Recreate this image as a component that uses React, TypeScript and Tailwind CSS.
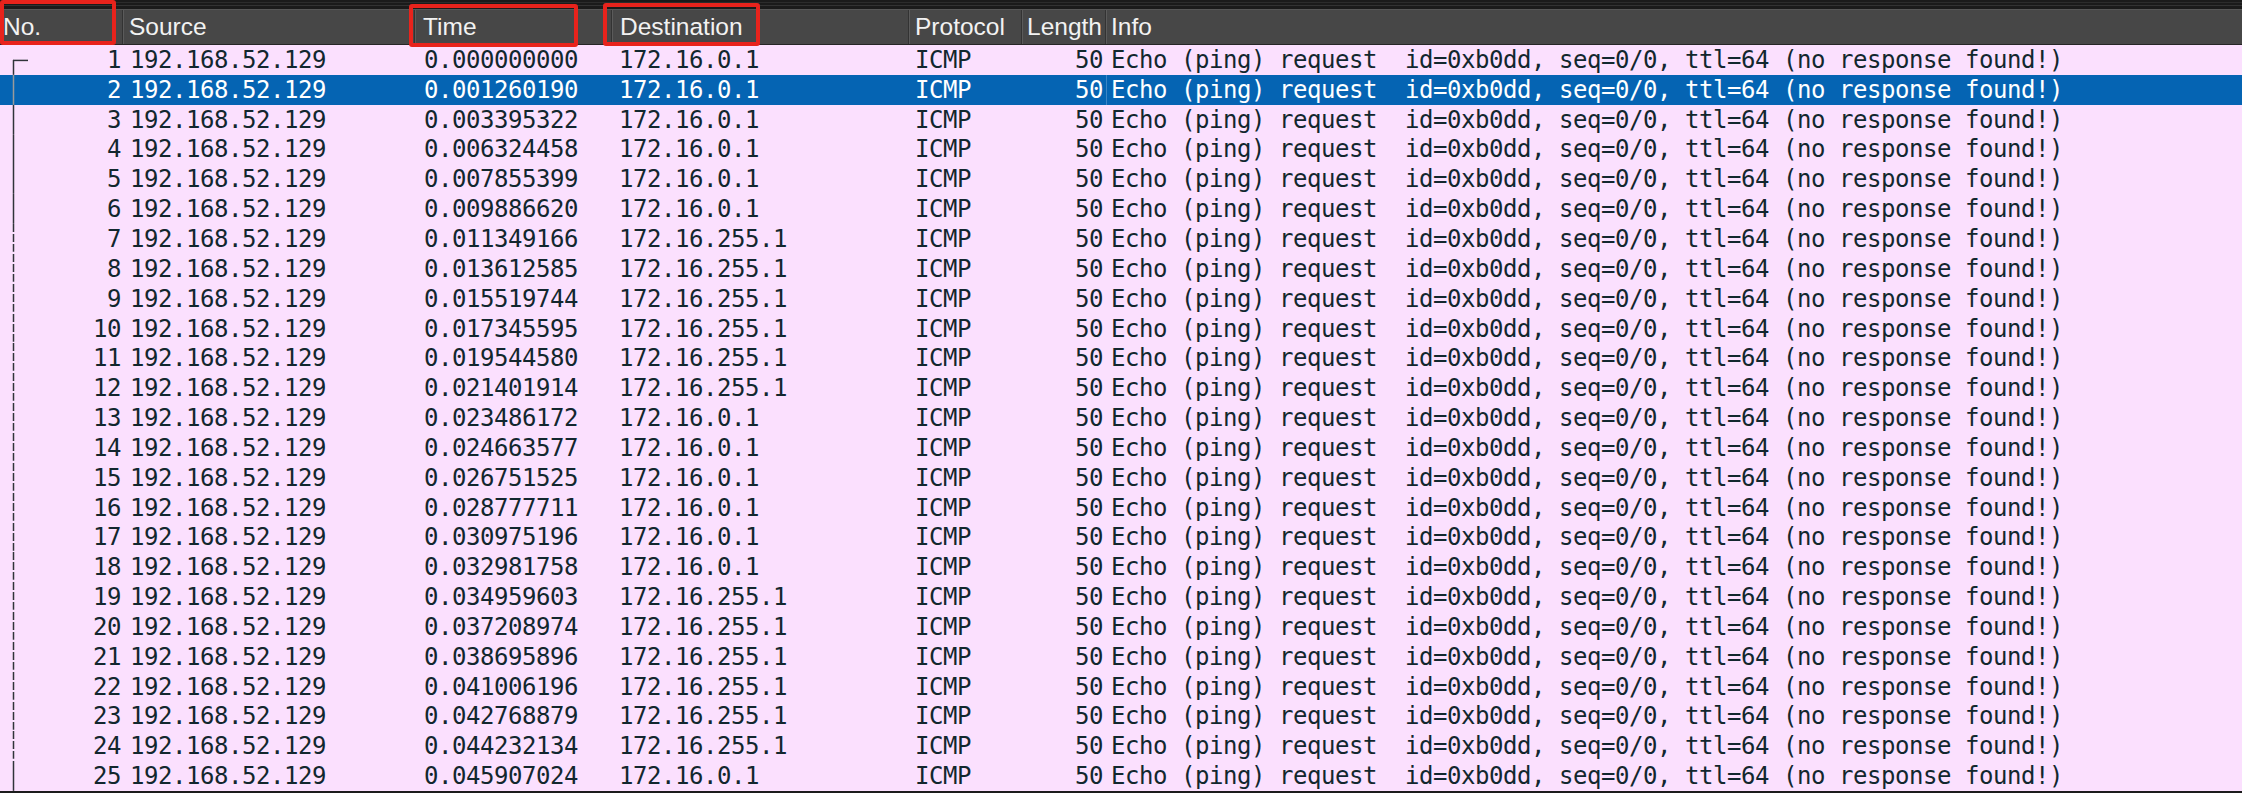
import React from "react";

type Row = { no: number; time: string; dst: string };

const data: [string, string][] = [
  ["0.000000000", "172.16.0.1"],
  ["0.001260190", "172.16.0.1"],
  ["0.003395322", "172.16.0.1"],
  ["0.006324458", "172.16.0.1"],
  ["0.007855399", "172.16.0.1"],
  ["0.009886620", "172.16.0.1"],
  ["0.011349166", "172.16.255.1"],
  ["0.013612585", "172.16.255.1"],
  ["0.015519744", "172.16.255.1"],
  ["0.017345595", "172.16.255.1"],
  ["0.019544580", "172.16.255.1"],
  ["0.021401914", "172.16.255.1"],
  ["0.023486172", "172.16.0.1"],
  ["0.024663577", "172.16.0.1"],
  ["0.026751525", "172.16.0.1"],
  ["0.028777711", "172.16.0.1"],
  ["0.030975196", "172.16.0.1"],
  ["0.032981758", "172.16.0.1"],
  ["0.034959603", "172.16.255.1"],
  ["0.037208974", "172.16.255.1"],
  ["0.038695896", "172.16.255.1"],
  ["0.041006196", "172.16.255.1"],
  ["0.042768879", "172.16.255.1"],
  ["0.044232134", "172.16.255.1"],
  ["0.045907024", "172.16.0.1"],
];

const rows: Row[] = data.map(([time, dst], i) => ({ no: i + 1, time, dst }));

function TreeMark({ first, dashed, selected }: { first: boolean; dashed: boolean; selected: boolean }) {
  const color = selected ? "#9a9a9a" : "#30343a";
  return (
    <svg width="30" height="30" viewBox="0 0 30 30" className="shrink-0 h-full" preserveAspectRatio="none">
      {first ? (
        <>
          <line x1="13.5" y1="15" x2="13.5" y2="30" stroke={color} strokeWidth="1.5" />
          <line x1="13" y1="15.5" x2="28" y2="15.5" stroke={color} strokeWidth="1.5" />
        </>
      ) : (
        <line
          x1="13.5"
          y1="0"
          x2="13.5"
          y2="30"
          stroke={color}
          strokeWidth="1.5"
          strokeDasharray={dashed ? "8 2" : undefined}
        />
      )}
    </svg>
  );
}

const mono = "font-['DejaVu_Sans_Mono','Liberation_Mono',monospace] text-[24px] tracking-[-0.45px]";

function HeaderCell({ label, className }: { label: string; className: string }) {
  return (
    <div
      className={`h-full flex items-center border-r border-[#333333] shadow-[inset_1px_0_0_#5b5b5b] whitespace-nowrap overflow-hidden ${className}`}
    >
      {label}
    </div>
  );
}

export default function App() {
  return (
    <div className="relative w-[2242px] h-[793px] bg-[#1c1c1c] overflow-hidden">
      {/* top band */}
      <div className="h-[9px] bg-[#1b1b1b] flex flex-col">
        <div className="h-[2px]" />
        <div className="h-px bg-[#2c2c2c]" />
        <div className="h-[2px]" />
        <div className="h-px bg-[#333333]" />
      </div>
      {/* header */}
      <div className="h-[36px] flex bg-[#474747] border-t border-[#575757] border-b border-b-[#262626] text-[#f2f2f2] font-['Liberation_Sans',Arial,sans-serif] text-[24.5px]">
        <HeaderCell label="No." className="w-[123px] pl-[3px] shadow-none" />
        <HeaderCell label="Source" className="w-[292px] pl-[6px]" />
        <HeaderCell label="Time" className="w-[197px] pl-[8px]" />
        <HeaderCell label="Destination" className="w-[297px] pl-[8px]" />
        <HeaderCell label="Protocol" className="w-[113px] pl-[6px]" />
        <HeaderCell label="Length" className="w-[84px] pl-[5px]" />
        <div className="h-full flex-1 flex items-center pl-[5px] shadow-[inset_1px_0_0_#5b5b5b]">Info</div>
      </div>
      {/* rows */}
      <div className={`flex flex-col ${mono}`}>
        {rows.map((r) => {
          const selected = r.no === 2;
          const dashed = r.no > 6 && r.no < 25;
          return (
            <div
              key={r.no}
              className={`h-[29.85px] shrink-0 flex items-center whitespace-nowrap ${
                selected ? "bg-[#0564b3] text-white" : "bg-[#fbe0fe] text-[#12272e]"
              }`}
            >
              <div className="w-[123px] h-full flex items-center">
                <TreeMark first={r.no === 1} dashed={dashed} selected={selected} />
                <div className="flex-1 text-right pr-[2px]">{r.no}</div>
              </div>
              <div className="w-[292px] pl-[7px]">192.168.52.129</div>
              <div className="w-[197px] pl-[9px]">{r.time}</div>
              <div className="w-[297px] pl-[7px]">{r.dst}</div>
              <div className="w-[113px] pl-[6px]">ICMP</div>
              <div className="w-[84px] text-right pr-[3px]">50</div>
              <div
                className={`flex-1 h-full flex items-center pl-[5px] ${
                  selected ? "shadow-[inset_1px_0_0_#3d86c6]" : ""
                }`}
              >
                {"Echo (ping) request  id=0xb0dd, seq=0/0, ttl=64 (no response found!)".replace(/ /g, "\u00a0")}
              </div>
            </div>
          );
        })}
      </div>
      {/* annotation boxes */}
      <div className="absolute left-0 top-0 w-[116px] h-[45px] border-[4px] border-[#e8231c] rounded-[3px]" />
      <div className="absolute left-[409px] top-[4px] w-[169px] h-[43px] border-[4px] border-[#e8231c] rounded-[3px]" />
      <div className="absolute left-[603px] top-[3px] w-[157px] h-[43px] border-[4px] border-[#e8231c] rounded-[3px]" />
    </div>
  );
}
